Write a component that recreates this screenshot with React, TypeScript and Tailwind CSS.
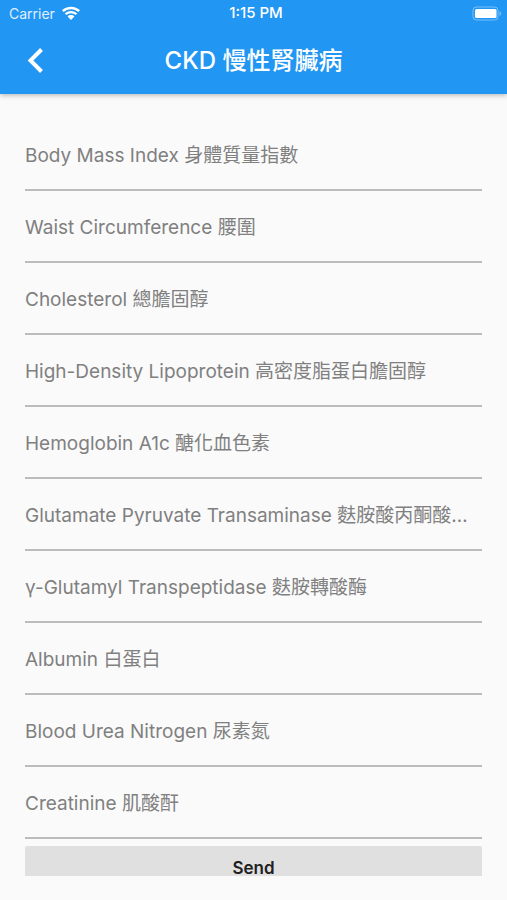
const fields = [
  { id: "bmi", label: "Body Mass Index 身體質量指數" },
  { id: "waist", label: "Waist Circumference 腰圍" },
  { id: "cholesterol", label: "Cholesterol 總膽固醇" },
  { id: "hdl", label: "High-Density Lipoprotein 高密度脂蛋白膽固醇" },
  { id: "hba1c", label: "Hemoglobin A1c 醣化血色素" },
  { id: "gpt", label: "Glutamate Pyruvate Transaminase 麩胺酸丙酮酸轉胺酶" },
  { id: "ggt", label: "γ-Glutamyl Transpeptidase 麩胺轉酸酶" },
  { id: "albumin", label: "Albumin 白蛋白" },
  { id: "bun", label: "Blood Urea Nitrogen 尿素氮" },
  { id: "creatinine", label: "Creatinine 肌酸酐" },
];

function WifiIcon() {
  return (
    <svg viewBox="0 0 20 15" className="h-[15px] w-5" fill="currentColor" aria-hidden="true">
      <path d="M10 .8C6.500 .8 3.300 2.100 1 4.300L2.700 6.100C4.600 4.300 7.200 3.200 10 3.200S15.400 4.300 17.300 6.100L19 4.300C16.700 2.100 13.500 .8 10 .8Z" />
      <path d="M10 5C7.600 5 5.400 5.900 3.800 7.400L5.500 9.100C6.700 8 8.300 7.300 10 7.300S13.300 8 14.500 9.100L16.200 7.400C14.600 5.900 12.400 5 10 5Z" />
      <path d="M10 9.100C8.700 9.100 7.500 9.600 6.600 10.400L10 14L13.400 10.400C12.500 9.600 11.300 9.100 10 9.100Z" />
    </svg>
  );
}

function BatteryIcon() {
  return (
    <svg viewBox="0 0 31 15" className="h-[15px] w-[31px]" aria-hidden="true">
      <rect x="1" y="1" width="25" height="13" rx="3.500" fill="none" stroke="#fff" strokeOpacity=".4" />
      <rect x="3" y="3" width="21.500" height="9" rx="1.500" fill="#fff" />
      <path d="M27.500 5.200v4.600c1-.4 1.700-1.200 1.700-2.300S28.500 5.600 27.500 5.200Z" fill="#fff" fillOpacity=".4" />
    </svg>
  );
}

export default function App() {
  return (
    <div className="flex min-h-dvh flex-col bg-[#fafafa] pb-6 font-['Inter','Noto_Sans_CJK_TC',sans-serif]">
      <header className="shrink-0 bg-[#2196f3] text-white shadow-[0_1px_5px_rgba(0,0,0,0.3)]">
        <div className="grid h-[27px] grid-cols-3 items-center pr-1 pl-[9px]">
          <div className="flex items-center gap-[6px] text-[14px] text-white/85">
            <span>Carrier</span>
            <span className="text-white">
              <WifiIcon />
            </span>
          </div>
          <time className="text-center text-[15px] font-medium">1:15 PM</time>
          <div className="flex justify-end">
            <BatteryIcon />
          </div>
        </div>
        <div className="grid h-[67px] grid-cols-[72px_1fr_72px] items-center">
          <button type="button" aria-label="Back" className="flex h-12 items-center pl-[27px]">
            <svg viewBox="0 0 18 26" className="h-[26px] w-[18px]" fill="none" stroke="currentColor" strokeWidth="4" aria-hidden="true">
              <path d="M14.500 1.500L3.500 12.500L14.500 23.500" />
            </svg>
          </button>
          <h1 className="text-center text-2xl font-medium">CKD 慢性腎臟病</h1>
        </div>
      </header>
      <main className="px-[25px] pt-[25px]">
        <form>
          {fields.map((field) => (
            <input
              key={field.id}
              id={field.id}
              name={field.id}
              type="text"
              aria-label={field.label}
              placeholder={field.label}
              className="block h-[72px] w-full border-b-2 border-[#bcbcbc] bg-transparent pt-[3px] text-[19px] text-ellipsis text-gray-900 outline-none placeholder:text-[#808080]"
            />
          ))}
          <button
            type="submit"
            className="mt-[7px] flex h-[30px] w-full items-end justify-center rounded-t-xs bg-[#e0e0e0] text-[17px] leading-4 font-semibold text-[#212121]"
          >
            Send
          </button>
        </form>
      </main>
    </div>
  );
}
